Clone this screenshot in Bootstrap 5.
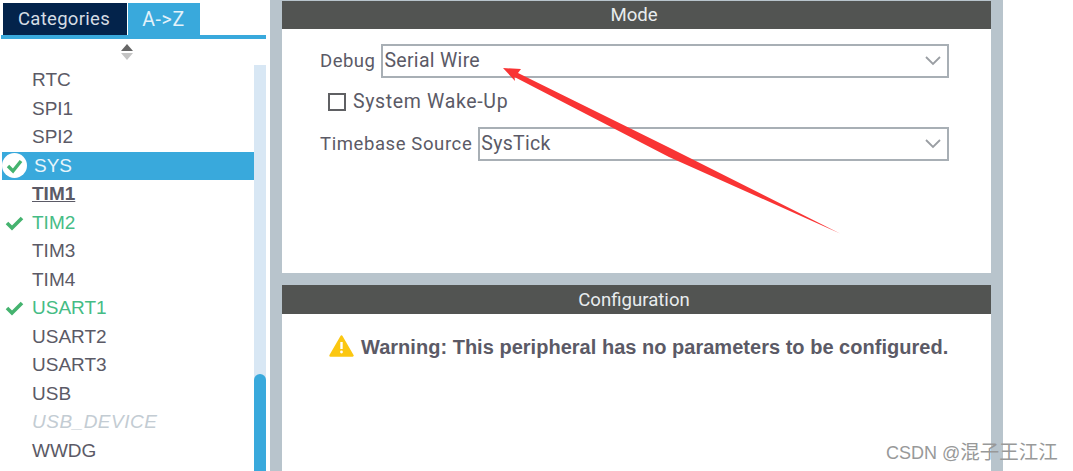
<!DOCTYPE html>
<html lang="en">
<head>
  <meta charset="UTF-8">
  <title>Pinout &amp; Configuration</title>
  <link href="https://cdn.jsdelivr.net/npm/bootstrap@5.3.2/dist/css/bootstrap.min.css" rel="stylesheet">
  <style>
    html, body { height: 471px; overflow: hidden; }
    body { background: #fff; font-family: Roboto, sans-serif; color: #5b5a66; font-size: 18.5px; }
    .stage { width: 1073px; height: 471px; position: relative; }
    .side { width: 270px; padding: 3px 4px 0 1px; }
    .tabs-row { padding-left: 2px; gap: 1px; height: 32px; }
    .tab-a, .tab-b { display: flex; align-items: center; justify-content: center; font-size: 18.5px; padding-top: 2px; }
    .tab-a { width: 124px; background: #03234b; color: #d5dce4; letter-spacing: .3px; padding-right: 2px; }
    .tab-b { width: 72px; background: #39a9dc; color: #e4f2fa; font-size: 19.5px; letter-spacing: .6px; padding-right: 1px; }
    .tab-rule { height: 4px; background: #39a9dc; }
    .sort-icon { height: 27px; padding-top: 5px; padding-right: 14px; }
    .list-wrap { height: 406px; padding-left: 1px; }
    .periph { flex: 1; font-family: "Liberation Sans", sans-serif; font-size: 19px; }
    .periph-row { height: 28.5px; padding-left: 30px; position: relative; line-height: 28.5px; white-space: nowrap; }
    .periph-row svg { position: absolute; left: 3px; top: 6px; }
    .row-sel { background: #39a9dc; color: #e8f5fb; padding-left: 32px; }
    .row-sel svg { left: 0; top: 1px; }
    .row-ok { color: #45bc85; }
    .row-bold { font-weight: 700; text-decoration: underline; }
    .row-off { color: #c3ccd3; font-style: italic; letter-spacing: .5px; }
    .track { width: 12px; margin-top: -1px; background: #d8e7f4; }
    .thumb { height: 97px; margin-top: 309px; background: #39a9dc; border-radius: 6px 6px 0 0; }
    .main-col { width: 733px; background: #b8c4cc; padding: 1px 12px 0 12px; }
    .head-bar { background: #525452; color: #e8ecee; text-align: center; font-size: 18.6px; height: 28px; line-height: 28px; padding-right: 5px; }
    .mode-body { height: 244px; background: #fff; padding: 15px 42px 0 38px; }
    .conf-head { margin-top: 12px; height: 29px; line-height: 30px; }
    .conf-body { height: 157px; background: #fff; padding-top: 21px; padding-left: 47px; }
    .field-row { gap: 6px; height: 34px; align-items: center; letter-spacing: .6px; }
    .fake-select { flex: 1; height: 34px; border: 2px solid #a8afb5; padding: 0 6px 0 1px; display: flex; align-items: center; justify-content: space-between; font-size: 19.5px; letter-spacing: .3px; }
    .field-label { padding-top: 2px; }
    .field-row:first-child .field-label { letter-spacing: .5px; }
    .wake-row { margin: 7px 0 8px 8px; height: 34px; gap: 7px; align-items: center; font-size: 19.5px; letter-spacing: .65px; }
    .wake-box { width: 18px; height: 18px; border: 2px solid #5f6063; background: #fff; }
    .warn-text { font-family: "Liberation Sans", sans-serif; font-weight: 700; font-size: 20px; letter-spacing: .02px; line-height: 24px; color: #5b5a66; margin-left: 7px; white-space: nowrap; }
    .arrow-layer { position: absolute; left: 0; top: 0; pointer-events: none; }
    .mark-text { position: absolute; left: 886px; top: 439px; font-family: "Liberation Sans", sans-serif; font-size: 18px; line-height: 23px; color: #989999; white-space: nowrap; }
    .mark-text span { font-family: "Noto Sans CJK SC", sans-serif; font-size: 19.5px; }
  </style>
</head>
<body>
  <div class="stage d-flex">
    <div class="side">
      <div class="tabs-row d-flex">
        <div class="tab-a">Categories</div>
        <div class="tab-b">A-&gt;Z</div>
      </div>
      <div class="tab-rule"></div>
      <div class="sort-icon d-flex justify-content-center align-items-start">
        <svg width="14" height="16" viewBox="0 0 14 16"><path d="M7 0 13 7H1Z" fill="#666"/><path d="M1 9H13L7 16Z" fill="#c4c4c4"/></svg>
      </div>
      <div class="list-wrap d-flex">
        <div class="periph">
          <div class="periph-row">RTC</div>
          <div class="periph-row">SPI1</div>
          <div class="periph-row">SPI2</div>
          <div class="periph-row row-sel">
            <svg width="25" height="25" viewBox="0 0 25 25"><circle cx="12.5" cy="12.5" r="12.5" fill="#fff"/><path d="M6 13 11 18 19 8" fill="none" stroke="#45b36f" stroke-width="3.4"/></svg>
            SYS
          </div>
          <div class="periph-row row-bold">TIM1</div>
          <div class="periph-row row-ok">
            <svg width="19" height="16" viewBox="0 0 19 16"><path d="M2 8 7 13 17 3" fill="none" stroke="#45b36f" stroke-width="3.6"/></svg>
            TIM2
          </div>
          <div class="periph-row">TIM3</div>
          <div class="periph-row">TIM4</div>
          <div class="periph-row row-ok">
            <svg width="19" height="16" viewBox="0 0 19 16"><path d="M2 8 7 13 17 3" fill="none" stroke="#45b36f" stroke-width="3.6"/></svg>
            USART1
          </div>
          <div class="periph-row">USART2</div>
          <div class="periph-row">USART3</div>
          <div class="periph-row">USB</div>
          <div class="periph-row row-off">USB_DEVICE</div>
          <div class="periph-row">WWDG</div>
        </div>
        <div class="track"><div class="thumb"></div></div>
      </div>
    </div>
    <div class="main-col">
      <div class="head-bar">Mode</div>
      <div class="mode-body">
        <div class="field-row d-flex">
          <span class="field-label">Debug</span>
          <div class="fake-select"><span>Serial Wire</span>
            <svg width="16" height="10" viewBox="0 0 16 10"><path d="M1 1 8 8 15 1" fill="none" stroke="#9a9ea3" stroke-width="1.8"/></svg>
          </div>
        </div>
        <div class="wake-row d-flex">
          <div class="wake-box"></div>
          <span>System Wake-Up</span>
        </div>
        <div class="field-row d-flex">
          <span class="field-label">Timebase Source</span>
          <div class="fake-select"><span>SysTick</span>
            <svg width="16" height="10" viewBox="0 0 16 10"><path d="M1 1 8 8 15 1" fill="none" stroke="#9a9ea3" stroke-width="1.8"/></svg>
          </div>
        </div>
      </div>
      <div class="head-bar conf-head">Configuration</div>
      <div class="conf-body d-flex align-items-start">
        <svg width="25" height="22" viewBox="0 0 25 22"><path d="M12.5 1.5 23.5 20.5H1.5Z" fill="#fbc711" stroke="#fbc711" stroke-width="2.4" stroke-linejoin="round"/><path d="M12.5 7V14" stroke="#fff" stroke-width="2.4"/><circle cx="12.5" cy="17" r="1.4" fill="#fff"/></svg>
        <span class="warn-text">Warning: This peripheral has no parameters to be configured.</span>
      </div>
    </div>
    <svg class="arrow-layer" width="1073" height="471" viewBox="0 0 1073 471">
      <path d="M503 68 521 69 518 73 670 148 840 233.5 669 157 514.5 77 515 81Z" fill="#f93434"/>
    </svg>
    <div class="mark-text">CSDN @<span>混子王江江</span></div>
  </div>
  <script src="https://cdn.jsdelivr.net/npm/bootstrap@5.3.2/dist/js/bootstrap.bundle.min.js"></script>
</body>
</html>
